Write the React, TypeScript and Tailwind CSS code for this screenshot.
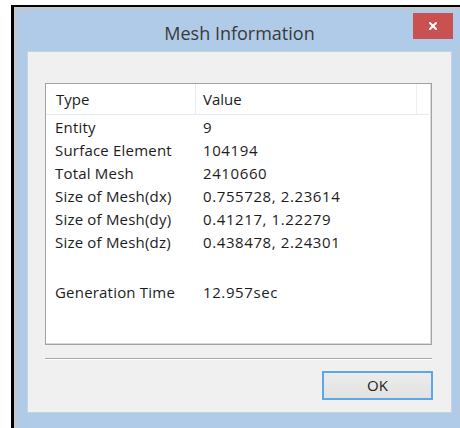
import { X } from "lucide-react";

type Row = { type: string; value: string };

const rows: Row[] = [
  { type: "Entity", value: "9" },
  { type: "Surface Element", value: "104194" },
  { type: "Total Mesh", value: "2410660" },
  { type: "Size of Mesh(dx)", value: "0.755728, 2.23614" },
  { type: "Size of Mesh(dy)", value: "0.41217, 1.22279" },
  { type: "Size of Mesh(dz)", value: "0.438478, 2.24301" },
  { type: "", value: "" },
  { type: "Generation Time", value: "12.957sec" },
];

export default function App() {
  return (
    <div
      className="h-[428px] w-[460px] overflow-hidden bg-white pl-[11px] pt-[5px]"
      style={{ fontFamily: '"Open Sans", "Noto Sans", sans-serif' }}
    >
      {/* window frame */}
      <div className="h-[426px] w-[470px] border-b-[3px] border-l-[3px] border-t-[2px] border-black">
        <div className="flex h-full flex-col border-l-[3px] border-t-[3px] border-[#c3c8cf] bg-[#b0cbe8] px-[10px]">
          {/* title bar */}
          <div className="relative flex h-[41px] w-[425px] shrink-0 items-center justify-center pt-[5px]">
            <span className="text-[18px] text-[#3a3a3a]">Mesh Information</span>
            <button
              type="button"
              className="absolute right-[-1px] top-[3px] flex h-[26px] w-[40px] items-center justify-center bg-[#c9514f]"
            >
              <X className="h-[12px] w-[12px] text-white" strokeWidth={4} />
            </button>
          </div>

          {/* client area */}
          <div className="flex h-[362px] w-[425px] flex-col border border-[#c4d2e2] bg-[#f0f0f0] pl-[17px] pt-[31px] text-[15px] text-[#1c1c1c]">
            <div className="h-[262px] w-[387px] border border-[#a3a3a3] bg-white shadow-[inset_-1px_-1px_0_#dadada]">
              <div className="flex h-[31px] border-b border-[#e3ebf3]">
                <div className="flex w-[150px] items-center border-r border-[#e3ebf3] pl-[10px]">Type</div>
                <div className="flex w-[221px] items-center border-r border-[#e9f0f7] pl-[7px]">Value</div>
              </div>
              <div className="pt-[1px]">
                {rows.map((r, i) => (
                  <div key={i} className={`flex items-center ${r.type ? "h-[23px]" : "h-[27px]"}`}>
                    <div className="w-[150px] pl-[9px] tracking-[0.2px]">{r.type}</div>
                    <div className="pl-[7px] tracking-[0.6px]">{r.value}</div>
                  </div>
                ))}
              </div>
            </div>

            <div className="mt-[13px] h-[2px] w-[387px] border-b border-t border-b-white border-t-[#a8a8a8]" />

            <div className="mt-[11px] flex w-[388px] justify-end">
              <button
                type="button"
                className="h-[29px] w-[111px] border-2 border-[#5aa7ec] bg-gradient-to-b from-[#ececec] to-[#e2e2e2] text-[15px] text-[#222]"
              >
                OK
              </button>
            </div>
          </div>
        </div>
      </div>
    </div>
  );
}
